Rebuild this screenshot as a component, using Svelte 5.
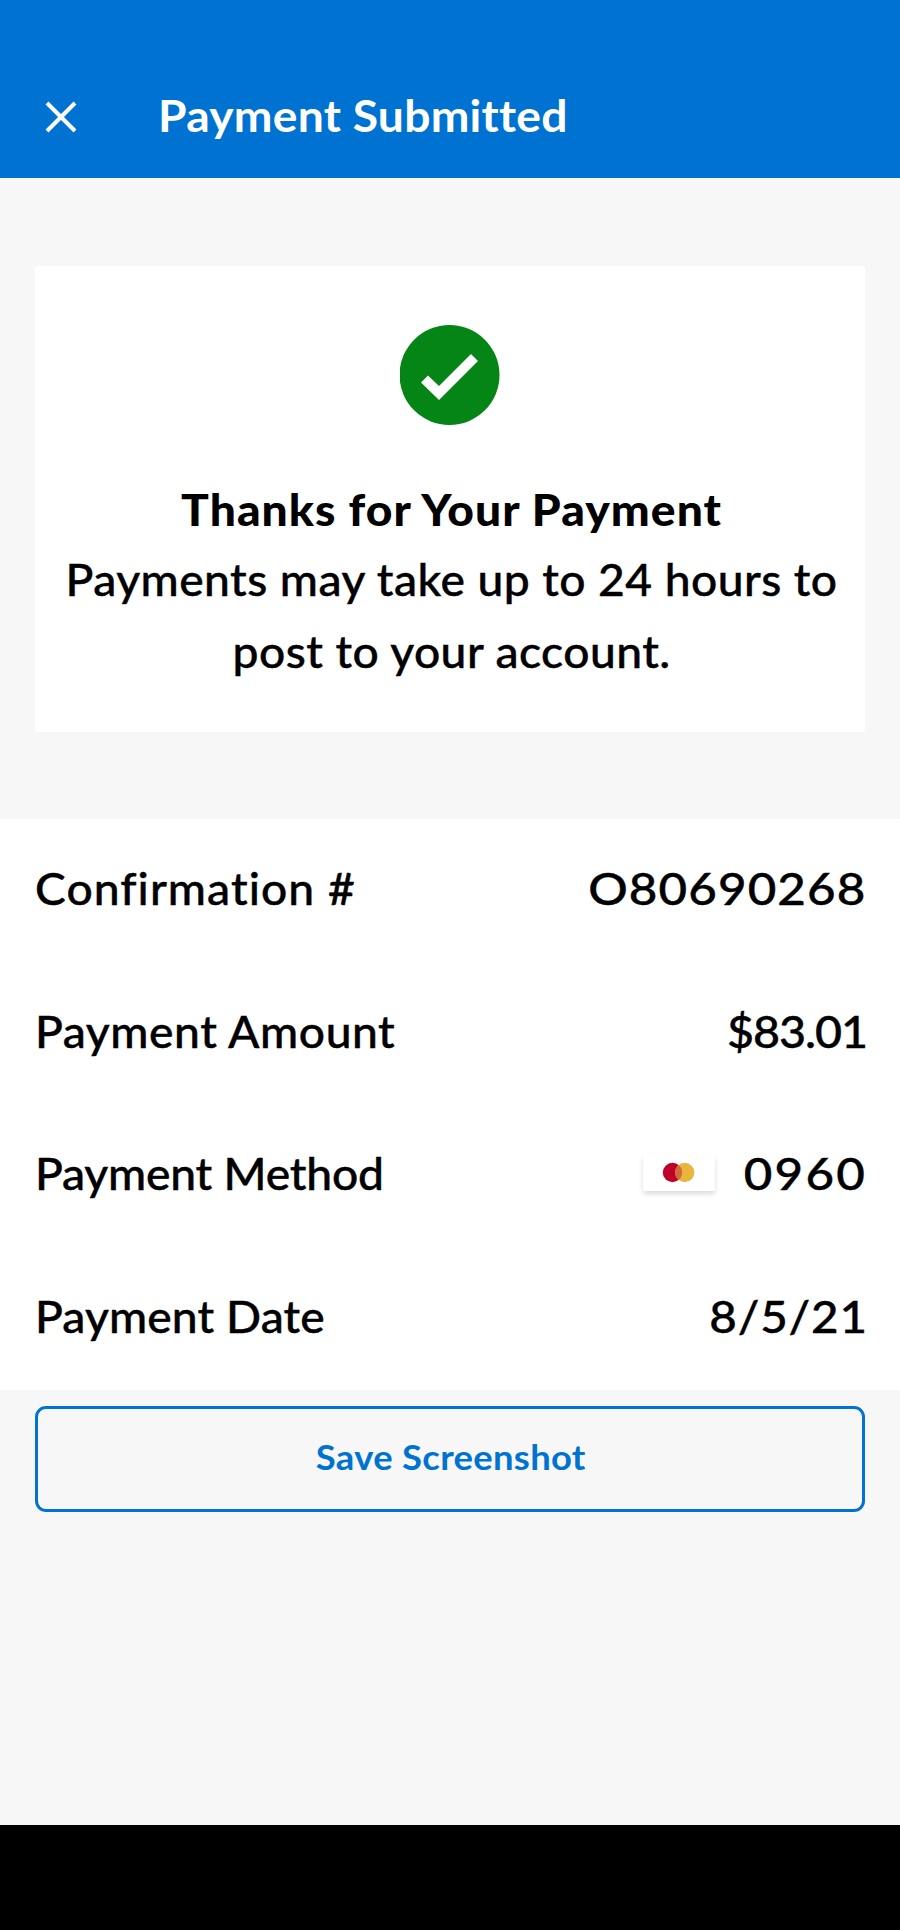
<script>
  let title = "Payment Submitted";

  let details = [
    { label: "Confirmation #", value: "O80690268", key: "confirmation" },
    { label: "Payment Amount", value: "$83.01", key: "amount" },
    { label: "Payment Method", value: "0960", key: "method", card: true },
    { label: "Payment Date", value: "8/5/21", key: "date" }
  ];
</script>

<main>
  <header>
    <button class="close" aria-label="Close">
      <svg width="32" height="32" viewBox="0 0 32 32">
        <path d="M2 2 L30 30 M30 2 L2 30" />
      </svg>
    </button>
    <h1>{title}</h1>
  </header>

  <!-- Thank you card -->
  <section class="thanks">
    <svg class="check" width="100" height="100" viewBox="0 0 100 100">
      <circle cx="49.5" cy="50" r="50" fill="#058516" />
      <path d="M21 57.5 L28 50.5 L39 61 L71 29 L78 36 L39 75 Z" fill="#fff" />
    </svg>
    <h2>Thanks for Your Payment</h2>
    <p><span>Payments may take up to 24 hours to</span> <span>post to your account.</span></p>
  </section>

  <!-- Payment details -->
  <section class="details">
    {#each details as row}
      <div class="row {row.key}">
        <span class="label">{row.label}</span>
        <div class="right">
          {#if row.card}
            <svg class="card" width="72" height="36" viewBox="0 0 72 36">
              <circle cx="29.5" cy="17.5" r="9.7" fill="#c00029" />
              <circle cx="41.7" cy="17.5" r="9.7" fill="#e8b63c" />
              <path d="M35.6 10 A9.7 9.7 0 0 1 35.6 25 A9.7 9.7 0 0 1 35.6 10 Z" fill="#d2693a" />
            </svg>
          {/if}
          <span class="value">{row.value}</span>
        </div>
      </div>
    {/each}
  </section>

  <button class="save"><span>Save Screenshot</span></button>

  <footer></footer>
</main>

<style>
  :global(body) {
    margin: 0;
  }

  main {
    display: flex;
    flex-direction: column;
    width: 900px;
    height: 1930px;
    background-color: #f7f7f7;
    color: #000;
    font-family: Lato, "Open Sans", sans-serif;
    font-size: 44px;
    font-weight: 500;
    font-variant-ligatures: none;
    white-space: nowrap;
  }

  header {
    display: flex;
    align-items: center;
    box-sizing: border-box;
    height: 178px;
    padding: 56px 0 0 45px;
    background-color: #0072d1;
    color: #fff;
  }

  .close {
    display: flex;
    width: 32px;
    margin-right: 81px;
    padding: 0;
    border: none;
    background: none;
  }

  .close path {
    stroke: #fff;
    stroke-width: 4;
  }

  h1 {
    margin: 0;
    padding-bottom: 4px;
    font-size: 44px;
    font-weight: 700;
    letter-spacing: 0.25px;
    transform: scaleX(1.05);
    transform-origin: left;
  }

  .thanks {
    display: flex;
    flex-direction: column;
    align-items: center;
    box-sizing: border-box;
    height: 466px;
    margin: 88px 35px 0;
    padding-top: 59px;
    border-radius: 3px;
    background-color: #fff;
    text-align: center;
  }

  h2 {
    margin: 49px 0 0 3px;
    font-size: 44px;
    font-weight: 900;
    line-height: 71px;
    letter-spacing: 1px;
    transform: scaleX(1.05);
  }

  p {
    display: flex;
    flex-direction: column;
    margin: -1px 0 0 3px;
    line-height: 71.5px;
    letter-spacing: 0.42px;
    transform: scaleX(1.05);
  }

  p,
  .label,
  .value {
    -webkit-text-stroke: 0.4px #000;
  }

  .details {
    margin-top: 87px;
    background-color: #fff;
  }

  .row {
    display: flex;
    align-items: center;
    justify-content: space-between;
    box-sizing: border-box;
    height: 142.7px;
    padding: 0 35px 5px;
  }

  .right {
    display: flex;
    align-items: center;
    gap: 42px;
  }

  .label {
    transform: scaleX(1.05);
    transform-origin: left;
  }

  .value {
    transform-origin: right;
  }

  .confirmation .label {
    letter-spacing: 1px;
  }

  .confirmation .value {
    margin-right: -1px;
    letter-spacing: 1px;
    transform: scaleX(1.12);
  }

  .amount .label {
    letter-spacing: 0.53px;
  }

  .amount .value {
    margin-right: -2px;
    letter-spacing: -1px;
    transform: scaleX(1.06);
  }

  .method .label {
    letter-spacing: -0.2px;
  }

  .method .value {
    margin-right: -2px;
    letter-spacing: 2px;
    transform: scaleX(1.12);
  }

  .date .label {
    letter-spacing: 0.1px;
  }

  .date .value {
    margin-right: -3px;
    letter-spacing: 0.8px;
    transform: scaleX(1.08);
  }

  .card {
    border-radius: 2px;
    box-shadow: 0 3px 5px rgba(0, 0, 0, 0.14);
  }

  .save {
    height: 106px;
    margin: 16px 35px 0;
    padding: 0 0 5px 2px;
    border: 3px solid #0072d1;
    border-radius: 11px;
    background: none;
    color: #0072d1;
    font-family: inherit;
    font-size: 35px;
    font-weight: 700;
    letter-spacing: 0.3px;
  }

  .save span {
    display: inline-block;
    transform: scaleX(1.04);
  }

  footer {
    height: 105px;
    margin-top: auto;
    background-color: #000;
  }
</style>
